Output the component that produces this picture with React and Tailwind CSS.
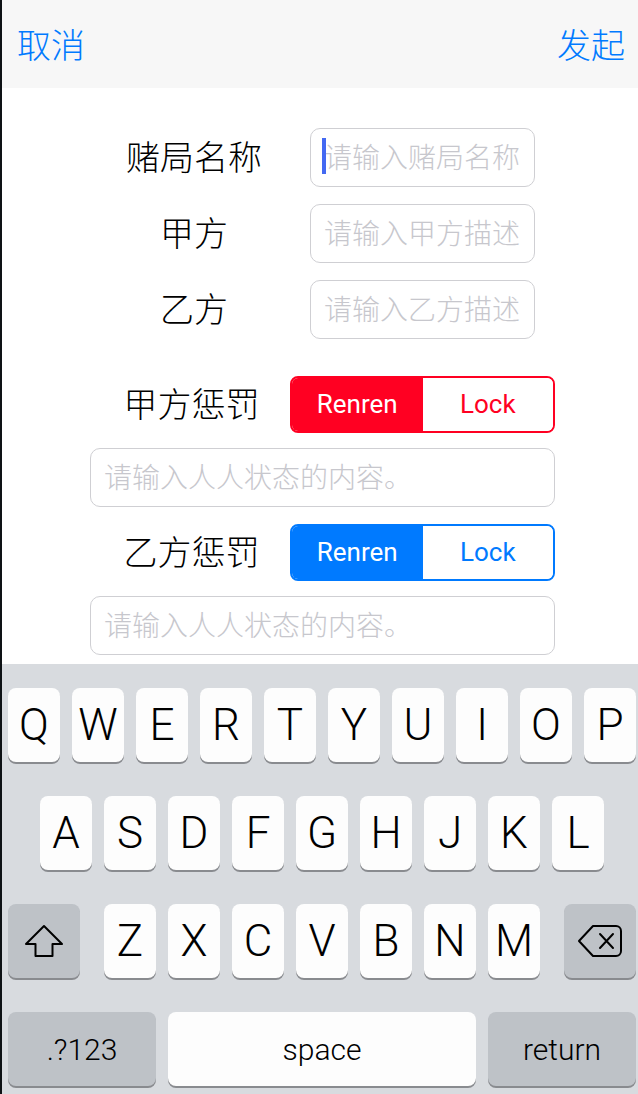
const cjk = { fontFamily: '"Noto Sans CJK SC", "Liberation Sans", sans-serif' }
const latin = { fontFamily: 'Roboto, "Liberation Sans", sans-serif' }

function Field({ placeholder, focused }) {
  return (
    <div className="relative ml-[15px] flex h-[59px] w-[225px] items-center rounded-[10px] border border-[#cfcfd3] bg-white pb-[3px] pl-[13px]">
      {focused && <span className="absolute left-[11px] top-[9px] h-[36px] w-[4px] bg-[#4469f2]" />}
      <span className="text-[28px] font-light leading-none text-[#c7c7cd]" style={cjk}>{placeholder}</span>
    </div>
  )
}

function Segmented({ color }) {
  const red = color === 'red'
  return (
    <div className={`flex h-[57px] w-[265px] overflow-hidden rounded-[8px] border-2 font-normal ${red ? 'border-[#ff0022]' : 'border-[#007aff]'}`} style={latin}>
      <div className={`flex flex-1 items-center justify-center text-[26px] text-white ${red ? 'bg-[#ff0022]' : 'bg-[#007aff]'}`}>Renren</div>
      <div className={`flex flex-1 items-center justify-center bg-white text-[26px] ${red ? 'text-[#ff0022]' : 'text-[#007aff]'}`}>Lock</div>
    </div>
  )
}

function Key({ children, gray, w = 'w-[52px]', small }) {
  return (
    <div
      className={`flex h-[74px] ${w} items-center justify-center rounded-[8px] shadow-[0_2px_0_#898b8f] ${gray ? 'bg-[#bec2c7]' : 'bg-[#fdfdfd]'} ${small ? 'text-[30px]' : 'text-[44px]'} font-light text-black`}
      style={latin}
    >
      {children}
    </div>
  )
}

function ShiftIcon() {
  return (
    <svg width="40" height="34" viewBox="0 0 40 34" fill="none" stroke="#000" strokeWidth="2" strokeLinejoin="round">
      <path d="M20 2 L38 20 H28.5 V32 H11.5 V20 H2 Z" />
    </svg>
  )
}

function DeleteIcon() {
  return (
    <svg width="46" height="34" viewBox="0 0 46 34" fill="none" stroke="#000" strokeWidth="2" strokeLinejoin="round" strokeLinecap="round">
      <path d="M16 2 H39 a5 5 0 0 1 5 5 V27 a5 5 0 0 1 -5 5 H16 L2 17 Z" />
      <path d="M23 10 L36 24 M36 10 L23 24" />
    </svg>
  )
}

export default function App() {
  const row1 = ['Q', 'W', 'E', 'R', 'T', 'Y', 'U', 'I', 'O', 'P']
  const row2 = ['A', 'S', 'D', 'F', 'G', 'H', 'J', 'K', 'L']
  const row3 = ['Z', 'X', 'C', 'V', 'B', 'N', 'M']

  return (
    <div className="flex h-[1094px] w-[638px] flex-col overflow-hidden border-l-2 border-[#0e1215] bg-white">
      {/* nav bar */}
      <div className="flex h-[88px] shrink-0 items-center justify-between bg-[#f7f7f7] pb-[2px] pl-[15px] pr-[13px] text-[34px] font-light text-[#007aff]" style={cjk}>
        <span>取消</span>
        <span>发起</span>
      </div>

      {/* form */}
      <div className="flex flex-1 flex-col pt-[40px] font-light" style={cjk}>
        <div className="flex items-center">
          <div className="ml-[91px] w-[202px] pb-[5px] text-center text-[34px] text-black">赌局名称</div>
          <Field placeholder="请输入赌局名称" focused />
        </div>
        <div className="mt-[17px] flex items-center">
          <div className="ml-[91px] w-[202px] pb-[5px] text-center text-[34px] text-black">甲方</div>
          <Field placeholder="请输入甲方描述" />
        </div>
        <div className="mt-[17px] flex items-center">
          <div className="ml-[91px] w-[202px] pb-[5px] text-center text-[34px] text-black">乙方</div>
          <Field placeholder="请输入乙方描述" />
        </div>

        <div className="mt-[37px] flex items-center">
          <div className="ml-[91px] w-[197px] pb-[5px] text-center text-[34px] text-black">甲方惩罚</div>
          <Segmented color="red" />
        </div>
        <div className="ml-[88px] mt-[15px] flex h-[59px] w-[465px] items-center rounded-[10px] border border-[#cfcfd3] pb-[3px] pl-[13px] text-[28px] text-[#c7c7cd]">
          请输入人人状态的内容。
        </div>

        <div className="mt-[17px] flex items-center">
          <div className="ml-[91px] w-[197px] pb-[5px] text-center text-[34px] text-black">乙方惩罚</div>
          <Segmented color="blue" />
        </div>
        <div className="ml-[88px] mt-[15px] flex h-[59px] w-[465px] items-center rounded-[10px] border border-[#cfcfd3] pb-[3px] pl-[13px] text-[28px] text-[#c7c7cd]">
          请输入人人状态的内容。
        </div>
      </div>

      {/* keyboard */}
      <div className="flex h-[430px] shrink-0 flex-col gap-[34px] bg-[#d8dbdf] pt-[24px]">
        <div className="flex gap-[12px] pl-[6px]">
          {row1.map(k => <Key key={k}>{k}</Key>)}
        </div>
        <div className="flex gap-[12px] pl-[38px]">
          {row2.map(k => <Key key={k}>{k}</Key>)}
        </div>
        <div className="flex pl-[6px]">
          <Key gray w="w-[72px]"><ShiftIcon /></Key>
          <div className="ml-[24px] flex gap-[12px]">
            {row3.map(k => <Key key={k}>{k}</Key>)}
          </div>
          <div className="ml-[24px]">
            <Key gray w="w-[72px]"><DeleteIcon /></Key>
          </div>
        </div>
        <div className="flex gap-[12px] pl-[6px]">
          <Key gray small w="w-[148px]">.?123</Key>
          <Key small w="w-[308px]">space</Key>
          <Key gray small w="w-[148px]">return</Key>
        </div>
      </div>
    </div>
  )
}
